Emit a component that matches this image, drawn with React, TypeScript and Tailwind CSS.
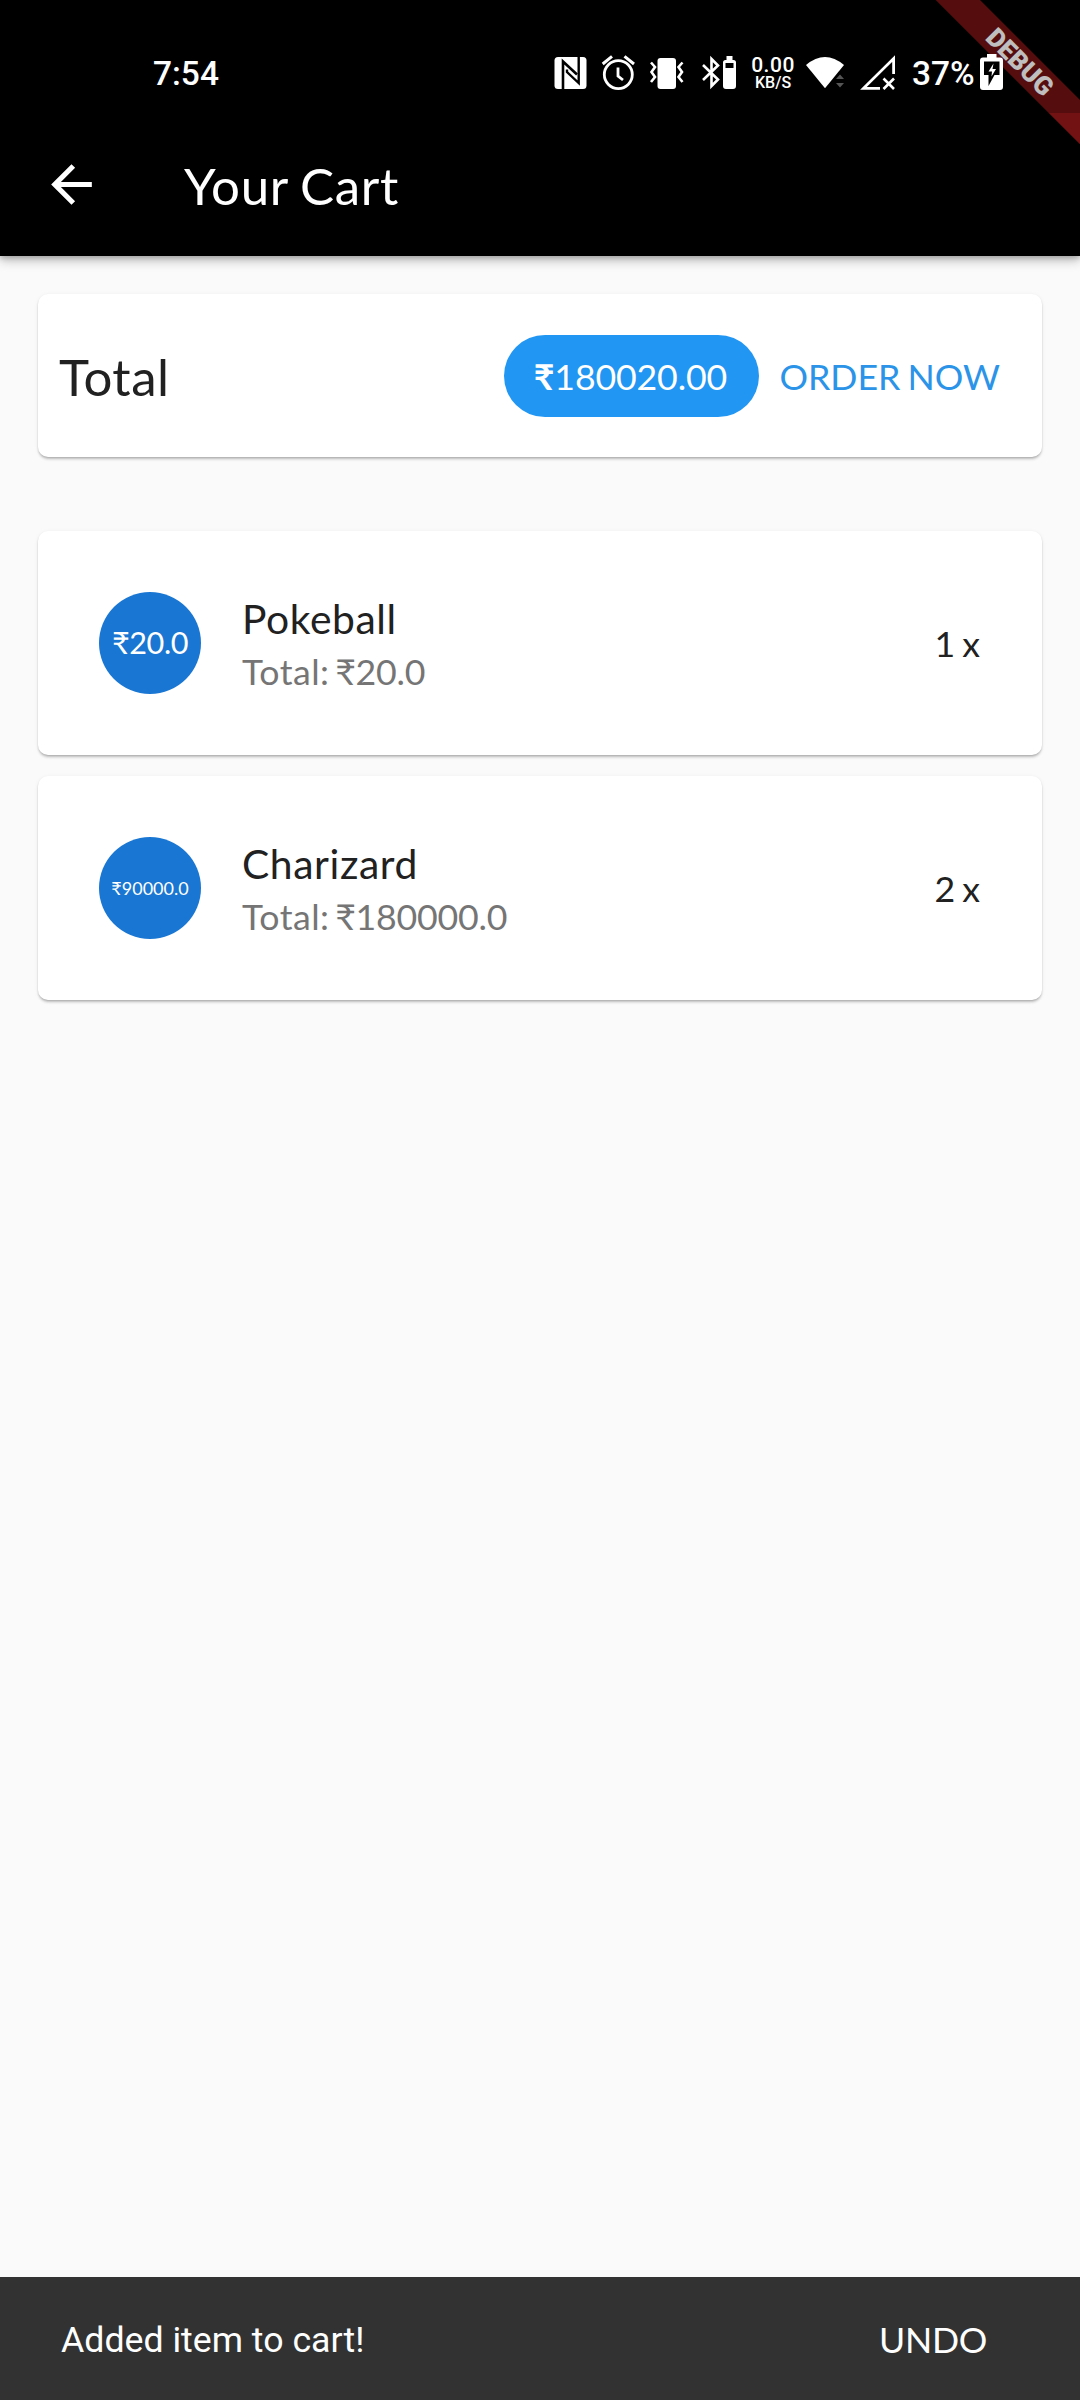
import React from "react";

const items = [
  { name: "Pokeball", price: "₹20.0", total: "₹20.0", qty: "1 x", small: false },
  { name: "Charizard", price: "₹90000.0", total: "₹180000.0", qty: "2 x", small: true },
];

const cardClass =
  "rounded-[10px] bg-white shadow-[0_3px_3px_-1px_rgba(0,0,0,0.2),0_1px_2px_rgba(0,0,0,0.12),0_1px_5px_rgba(0,0,0,0.05)]";

function NfcIcon() {
  return (
    <svg className="h-[36px] w-[34px]" viewBox="553 55 34 36">
      <rect x="554.5" y="57" width="32" height="32" rx="3.5" fill="#fff" />
      <path d="M563 89V61.500L577 74.500" fill="none" stroke="#000" strokeWidth="2.6" />
      <path d="M567 69.500V72L578.700 83V57" fill="none" stroke="#000" strokeWidth="2.4" />
    </svg>
  );
}

function AlarmIcon() {
  return (
    <svg className="h-[36px] w-[34px]" viewBox="601 55 34 36" fill="none" stroke="#fff">
      <circle cx="618.3" cy="74.6" r="14" strokeWidth="2.8" />
      <path d="M618 67.500V76L623 80" strokeWidth="2.8" />
      <path d="M602.700 64L612 56.300M624.500 56.300L634 64" strokeWidth="3" />
    </svg>
  );
}

function VibrateIcon() {
  return (
    <svg className="h-[36px] w-[36px]" viewBox="649 55 36 36">
      <rect x="657.5" y="58" width="18.500" height="31" rx="3" fill="#fff" />
      <path
        d="M651 62.500L655 67L651.500 72L655 77L651 82M682.500 62.500L678.500 67L682 72L678.500 77L682.500 82"
        fill="none"
        stroke="#fff"
        strokeWidth="2.6"
      />
    </svg>
  );
}

function BluetoothIcon() {
  return (
    <svg className="h-[36px] w-[36px]" viewBox="701 55 36 36">
      <path d="M703 65L718 79.500L711.500 86V59L718 65.500L703 80" fill="none" stroke="#fff" strokeWidth="2.6" />
      <path
        fillRule="evenodd"
        fill="#fff"
        d="M726.500 56h6v4h1a2.500 2.500 0 0 1 2.500 2.500V86a3 3 0 0 1-3 3h-7a3 3 0 0 1-3-3V62.500a2.500 2.500 0 0 1 2.500-2.500h1zM725.500 63v5h8v-5z"
      />
    </svg>
  );
}

function WifiIcon() {
  return (
    <svg className="h-[36px] w-[40px]" viewBox="805 55 40 36">
      <path d="M806 65Q825 49 844 65L825 88.200Z" fill="#fff" />
      <path d="M836 79L840 74.500L844 79ZM836 83L840 87.500L844 83Z" fill="#555" />
    </svg>
  );
}

function SignalIcon() {
  return (
    <svg className="h-[36px] w-[36px]" viewBox="860 55 36 36" fill="none" stroke="#fff">
      <path d="M893.600 74V58.500L863.500 88.300H880" strokeWidth="2.800" />
      <path d="M883.500 78.500L894 89M894 78.500L883.500 89" strokeWidth="2.600" />
    </svg>
  );
}

function BatteryIcon() {
  return (
    <svg className="h-[38px] w-[25px]" viewBox="979 53 25 38">
      <path
        fill="#fff"
        d="M987 54h9.500v3.500h3.500a3 3 0 0 1 3 3V87a3 3 0 0 1-3 3h-17a3 3 0 0 1-3-3V60.500a3 3 0 0 1 3-3h4z"
      />
      <path fill="#000" d="M984 61.500h15.500V75h-5L988.500 86V75H984z" />
      <path fill="#fff" d="M993.500 63.500L988.500 71.500h3.500l-.5 5 4.500-7.500h-3.500z" />
    </svg>
  );
}

function StatusBar() {
  return (
    <div className="relative flex h-[113px] bg-black/25 pl-[153px] font-[Roboto] text-white">
      <span className="mt-[54px] h-[40px] w-[400px] text-[33.500px] leading-[40px] font-medium">7:54</span>
      <div className="mt-[55px] flex h-[40px] items-start">
        <NfcIcon />
        <div className="ml-[14px]"><AlarmIcon /></div>
        <div className="ml-[14px]"><VibrateIcon /></div>
        <div className="ml-[16px]"><BluetoothIcon /></div>
        <div className="ml-[14px] flex w-[44px] flex-col items-center gap-px pt-[2px] font-medium">
          <span className="text-[21px] leading-[17px] tracking-[0.5px]">0.00</span>
          <span className="text-[16px] leading-[15px]">KB/S</span>
        </div>
        <div className="ml-[10px]"><WifiIcon /></div>
        <div className="ml-[15px]"><SignalIcon /></div>
        <span className="-mt-px ml-[16px] w-[67px] text-[33.500px] leading-[40px] font-medium">37%</span>
        <div className="-mt-[2px]"><BatteryIcon /></div>
      </div>
    </div>
  );
}

function DebugBanner() {
  return (
    <div className="absolute top-0 right-0 h-[150px] w-[150px] overflow-hidden">
      <svg className="h-[150px] w-[150px]" viewBox="0 0 150 150">
        <path d="M5.700 0H50L150 100V144.300Z" fill="#731212" />
        <text
          x="2"
          y="9"
          transform="translate(88.500 60.500) rotate(45)"
          textAnchor="middle"
          fill="#fff"
          fontFamily="Roboto, sans-serif"
          fontWeight="900"
          fontSize="26"
        >
          DEBUG
        </text>
      </svg>
    </div>
  );
}

export default function App() {
  return (
    <div className="flex h-[2400px] w-[1080px] flex-col overflow-hidden bg-[#fafafa] font-[Lato,sans-serif] text-[#212121]">
      <header className="relative z-10 h-[256px] shrink-0 bg-black text-white shadow-[0_5px_10px_rgba(0,0,0,0.22),0_2px_5px_rgba(0,0,0,0.2)]">
        <DebugBanner />
        <StatusBar />
        <div className="flex h-[143px] items-center pl-[41px]">
          <svg className="h-[61px] w-[61px]" viewBox="0 0 24 24" fill="#fff">
            <path d="M20 11H7.830l5.590-5.590L12 4l-8 8 8 8 1.410-1.410L7.830 13H20v-2z" />
          </svg>
          <h1 className="mt-px ml-[82px] text-[51px] leading-[61px] tracking-[0.750px] [word-spacing:-2px]">Your Cart</h1>
        </div>
      </header>

      <main className="flex-1 px-[38px] pt-[38px]">
        <section className={cardClass + " flex h-[163px] items-center pl-[21px]"}>
          <span className="mt-px flex-1 text-[51px] leading-[61px] tracking-[0.500px]">Total</span>
          <span className="flex h-[82px] w-[255px] items-center justify-center rounded-full bg-[#2196f3] text-[35.700px] leading-[43px] text-white">
            <span className="mt-[2px] mr-[3px] tracking-[-0.150px]"><span className="font-bold">₹</span>180020.00</span>
          </span>
          <span className="mt-[2px] mr-[42px] ml-[20px] text-[35.700px] leading-[43px] [word-spacing:-2px] text-[#2b94e8]">ORDER NOW</span>
        </section>

        <div className="mt-[74px] flex flex-col gap-[21px]">
          {items.map((item) => (
            <section key={item.name} className={cardClass + " flex h-[224px] items-center pr-[62px] pl-[61px]"}>
              <div className="flex h-[102px] w-[102px] items-center justify-center rounded-full bg-[#1976d2] text-white">
                <span className={item.small ? "text-[18px] leading-[24px]" : "text-[30.600px] leading-[36px] tracking-[-0.400px]"}>
                  {item.price}
                </span>
              </div>
              <div className="ml-[41px] flex flex-1 flex-col gap-[7px]">
                <span className="text-[40.800px] leading-[49px] tracking-[0.600px]">{item.name}</span>
                <span className="text-[35.700px] leading-[43px] text-[#757575]">
                  <span className="tracking-[0.500px] [word-spacing:-4px]">Total: </span>
                  <span className="tracking-[-0.200px]">{item.total}</span>
                </span>
              </div>
              <span className="text-[35.700px] leading-[43px] [word-spacing:-2px]">{item.qty}</span>
            </section>
          ))}
        </div>
      </main>

      <footer className="flex h-[123px] shrink-0 items-center justify-between bg-[#323232] pr-[93px] pl-[61px] text-[35.700px] leading-[43px] text-white">
        <span className="mt-[3px] font-[Roboto]">Added item to cart!</span>
        <span className="mt-px tracking-[-0.300px]">UNDO</span>
      </footer>
    </div>
  );
}
